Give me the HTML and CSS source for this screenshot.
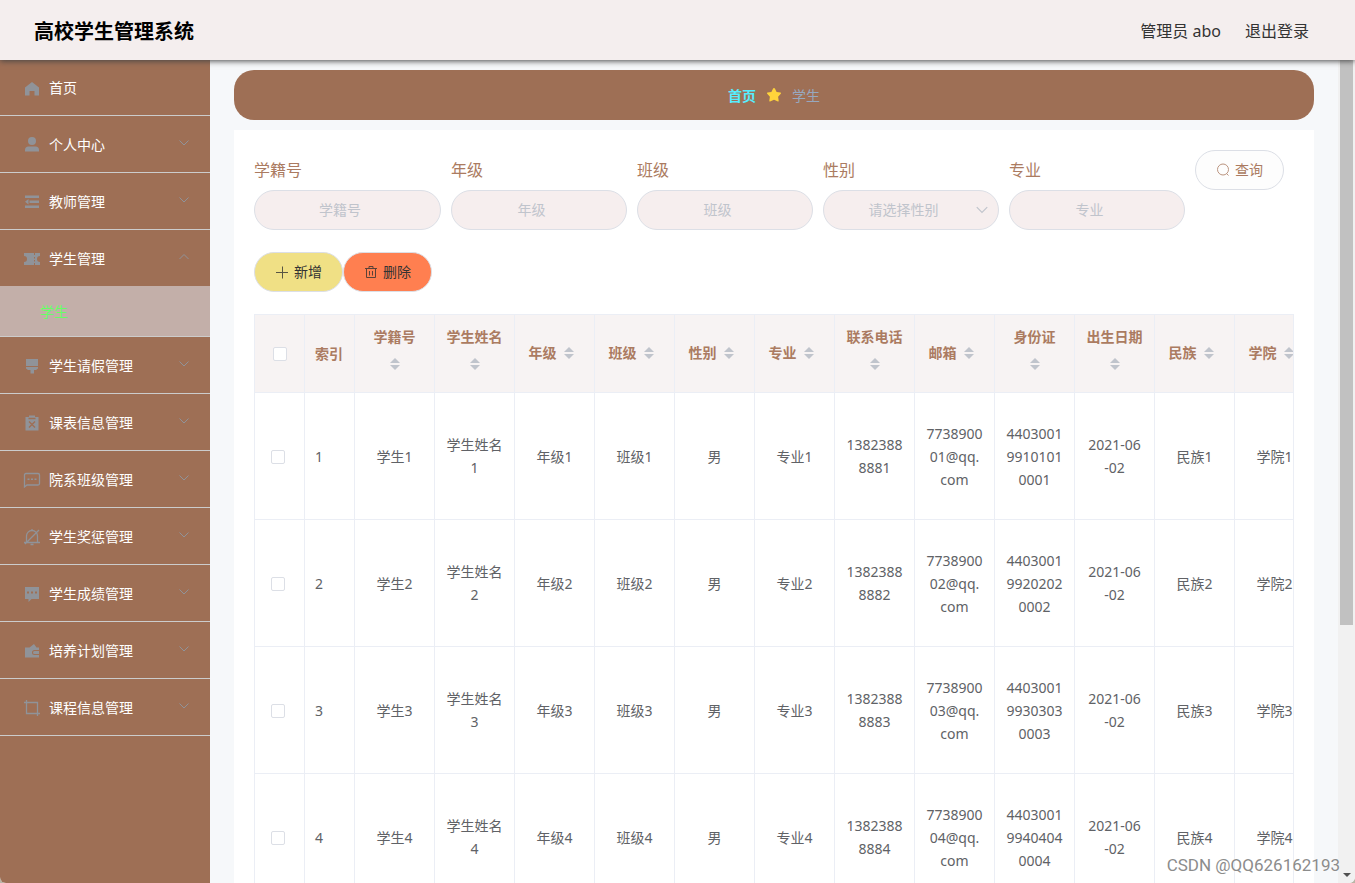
FILE: index.html
```html
<!DOCTYPE html>
<html lang="zh-CN">
<head>
<meta charset="utf-8">
<title>高校学生管理系统</title>
<link rel="stylesheet" href="styles.css">
</head>
<body>
<svg class="sprite" aria-hidden="true">
  <symbol id="down" viewBox="0 0 12 12"><path d="M1.5 3.5 6 8l4.500-4.500" fill="none" stroke="currentColor"/></symbol>
  <symbol id="up" viewBox="0 0 12 12"><path d="M1.500 8 6 3.500 10.500 8" fill="none" stroke="currentColor"/></symbol>
  <symbol id="home" viewBox="0 0 18 18"><path d="M9 2 16 7.500V15.500h-4.500v-4.500h-5v4.500H2V7.500z" fill="currentColor"/></symbol>
  <symbol id="user" viewBox="0 0 18 18"><circle cx="9" cy="5" r="4" fill="currentColor"/><path d="M2 15.500v-1.500A3.500 3.500 0 0 1 5.500 10.500h7a3.500 3.500 0 0 1 3.500 3.500V15.500z" fill="currentColor"/></symbol>
  <symbol id="fold" viewBox="0 0 18 18"><path d="M2 2.500h14v2.500H2zM6.500 7.500h9.500v2.500H6.500zM2 12.500h14V15H2zM2 8.750l3.500-2.750v5.500z" fill="currentColor"/></symbol>
  <symbol id="ticket" viewBox="0 0 18 18"><path d="M1 3h10v2h1V3h5v3a3 3 0 0 0 0 6v3h-5v-2h-1v2H1v-3a3 3 0 0 0 0-6zM11 7v1.500h1V7zm0 3v1.500h1V10z" fill="currentColor" fill-rule="evenodd"/></symbol>
  <symbol id="brush" viewBox="0 0 18 18"><path d="M3 2h12v7H3zM3 10h12v1.500L13 13h-2v3.500H7.500V13H5l-2-1.500z" fill="currentColor"/></symbol>
  <symbol id="release" viewBox="0 0 18 18"><path d="M3 3h3V1.500h6V3h3.500v13.500h-13V3z" fill="currentColor"/><path d="M5.500 4.500h7M6 7.500l6 6m0-6-6 6" stroke="#9e6f55" stroke-width="1.400" fill="none"/></symbol>
  <symbol id="chat" viewBox="0 0 18 18"><path d="M1.500 16V4q0-1.500 1.500-1.500h12q1.500 0 1.500 1.500v8.500q0 1.500-1.500 1.500H4z" fill="none" stroke="currentColor" stroke-width="1.300"/><path d="M4.500 7.500h2v1.500h-2zm3.500 0h2v1.500H8zm3.500 0h2v1.500h-2z" fill="currentColor"/></symbol>
  <symbol id="bell" viewBox="0 0 18 18"><path d="M3.500 14.500V8a5.500 5.500 0 0 1 11 0v6.500M1 14.500h16M16 2 2 16M9 1v1.500M7.500 16.500h3" fill="none" stroke="currentColor" stroke-width="1.300"/></symbol>
  <symbol id="comment" viewBox="0 0 18 18"><path d="M2 2h14v12H8.500L5.500 17v-3H2zm2 4.500v2h2v-2zm4 0v2h2v-2zm4 0v2h2v-2z" fill="currentColor" fill-rule="evenodd"/></symbol>
  <symbol id="wallet" viewBox="0 0 18 18"><path d="M2 5.500h4.500L11 2l2.500 3.500H16V8h-4.500a2.500 2.500 0 0 0 0 5H16v2.500H2z" fill="currentColor"/><path d="M11.500 9H16v3h-4.500a1.500 1.500 0 0 1 0-3" fill="currentColor"/></symbol>
  <symbol id="crop" viewBox="0 0 18 18"><path d="M1 3.500h13.500V17M3.500 1v13.500H17" fill="none" stroke="currentColor" stroke-width="1.300"/></symbol>
  <symbol id="star" viewBox="0 0 16 16"><path d="M8 1q.6 0 .9.600L10.600 5 14.500 5.600q1 .3.300 1.200L12.100 9.700l.6 4q.1 1-.8.700L8 12.700l-3.900 1.700q-.9.300-.8-.7l.6-4L1.200 6.800q-.7-.9.300-1.200L5.400 5 7.100 1.600Q7.400 1 8 1z" fill="currentColor"/></symbol>
  <symbol id="search" viewBox="0 0 14 14"><circle cx="7" cy="6.500" r="5.500" fill="none" stroke="currentColor"/><path d="m10.500 10.500 2 2" stroke="currentColor"/></symbol>
  <symbol id="plus" viewBox="0 0 14 14"><path d="M1 7.500h12M7.500 1.500v12" stroke="currentColor"/></symbol>
  <symbol id="trash" viewBox="0 0 14 14"><path d="M1 3.500h12M2.500 3.500v9h9v-9M5 3V1.500h4V3M5.500 6v4.500M8.500 6v4.500" fill="none" stroke="currentColor"/></symbol>
</svg>
<div class="app">
  <header class="top">
    <h1 class="brand">高校学生管理系统</h1>
    <nav class="account"><span>管理员 abo</span><a href="#">退出登录</a></nav>
  </header>
  <div class="body">
    <nav class="side">
      <a class="item home" href="#"><svg class="ico"><use href="#home"/></svg>首页</a>
      <a class="item" href="#"><svg class="ico"><use href="#user"/></svg>个人中心<svg class="arrow"><use href="#down"/></svg></a>
      <a class="item" href="#"><svg class="ico"><use href="#fold"/></svg>教师管理<svg class="arrow"><use href="#down"/></svg></a>
      <a class="item open" href="#"><svg class="ico"><use href="#ticket"/></svg>学生管理<svg class="arrow"><use href="#up"/></svg></a>
      <a class="subitem" href="#">学生</a>
      <a class="item" href="#"><svg class="ico"><use href="#brush"/></svg>学生请假管理<svg class="arrow"><use href="#down"/></svg></a>
      <a class="item" href="#"><svg class="ico"><use href="#release"/></svg>课表信息管理<svg class="arrow"><use href="#down"/></svg></a>
      <a class="item" href="#"><svg class="ico"><use href="#chat"/></svg>院系班级管理<svg class="arrow"><use href="#down"/></svg></a>
      <a class="item" href="#"><svg class="ico"><use href="#bell"/></svg>学生奖惩管理<svg class="arrow"><use href="#down"/></svg></a>
      <a class="item" href="#"><svg class="ico"><use href="#comment"/></svg>学生成绩管理<svg class="arrow"><use href="#down"/></svg></a>
      <a class="item" href="#"><svg class="ico"><use href="#wallet"/></svg>培养计划管理<svg class="arrow"><use href="#down"/></svg></a>
      <a class="item" href="#"><svg class="ico"><use href="#crop"/></svg>课程信息管理<svg class="arrow"><use href="#down"/></svg></a>
    </nav>
    <main class="main">
      <div class="crumbs"><a href="#">首页</a><svg class="star"><use href="#star"/></svg><span>学生</span></div>
      <section class="card">
        <form class="search">
          <div class="field"><label for="f1">学籍号</label><input id="f1" type="text" placeholder="学籍号"></div>
          <div class="field"><label for="f2">年级</label><input id="f2" type="text" placeholder="年级"></div>
          <div class="field"><label for="f3">班级</label><input id="f3" type="text" placeholder="班级"></div>
          <div class="field"><label for="f4">性别</label><div class="pick"><select id="f4"><option>请选择性别</option></select><svg class="pick-arrow"><use href="#down"/></svg></div></div>
          <div class="field"><label for="f5">专业</label><input id="f5" type="text" placeholder="专业"></div>
          <button class="btn query" type="button"><svg><use href="#search"/></svg>查询</button>
        </form>
        <div class="actions">
          <button class="btn add" type="button"><svg><use href="#plus"/></svg>新增</button>
          <button class="btn del" type="button"><svg><use href="#trash"/></svg>删除</button>
        </div>
        <div class="table-wrap">
          <table class="table">
            <colgroup><col class="narrow"><col class="narrow"><col span="12"></colgroup>
            <thead><tr>
              <th class="check"><input type="checkbox" aria-label="全选"></th>
              <th class="index">索引</th>
              <th><div class="sort">学籍号<i class="carets"></i></div></th>
              <th><div class="sort">学生姓名<i class="carets"></i></div></th>
              <th><div class="sort">年级<i class="carets"></i></div></th>
              <th><div class="sort">班级<i class="carets"></i></div></th>
              <th><div class="sort">性别<i class="carets"></i></div></th>
              <th><div class="sort">专业<i class="carets"></i></div></th>
              <th><div class="sort">联系电话<i class="carets"></i></div></th>
              <th><div class="sort">邮箱<i class="carets"></i></div></th>
              <th><div class="sort">身份证<i class="carets"></i></div></th>
              <th><div class="sort">出生日期<i class="carets"></i></div></th>
              <th><div class="sort">民族<i class="carets"></i></div></th>
              <th><div class="sort">学院<i class="carets"></i></div></th>
            </tr></thead>
            <tbody>
              <tr><td class="check"><input type="checkbox" aria-label="选择第1行"></td><td class="index">1</td><td>学生1</td><td>学生姓名1</td><td>年级1</td><td>班级1</td><td>男</td><td>专业1</td><td>13823888881</td><td>773890001@qq.<br>com</td><td>440300199101010001</td><td>2021-06<br>-02</td><td>民族1</td><td>学院1</td></tr>
              <tr><td class="check"><input type="checkbox" aria-label="选择第2行"></td><td class="index">2</td><td>学生2</td><td>学生姓名2</td><td>年级2</td><td>班级2</td><td>男</td><td>专业2</td><td>13823888882</td><td>773890002@qq.<br>com</td><td>440300199202020002</td><td>2021-06<br>-02</td><td>民族2</td><td>学院2</td></tr>
              <tr><td class="check"><input type="checkbox" aria-label="选择第3行"></td><td class="index">3</td><td>学生3</td><td>学生姓名3</td><td>年级3</td><td>班级3</td><td>男</td><td>专业3</td><td>13823888883</td><td>773890003@qq.<br>com</td><td>440300199303030003</td><td>2021-06<br>-02</td><td>民族3</td><td>学院3</td></tr>
              <tr><td class="check"><input type="checkbox" aria-label="选择第4行"></td><td class="index">4</td><td>学生4</td><td>学生姓名4</td><td>年级4</td><td>班级4</td><td>男</td><td>专业4</td><td>13823888884</td><td>773890004@qq.<br>com</td><td>440300199404040004</td><td>2021-06<br>-02</td><td>民族4</td><td>学院4</td></tr>
            </tbody>
          </table>
        </div>
      </section>
    </main>
    <div class="scrollbar" aria-hidden="true"><div class="thumb"></div><div class="rest"></div></div>
  </div>
  <div class="watermark">CSDN @QQ626162193</div>
</div>
</body>
</html>
```

FILE: styles.css
```css
* { box-sizing: border-box; }

body {
  margin: 0;
  background: #b9b5a6;
  color: #606266;
  font: 14px/23px "Noto Sans", "Noto Sans CJK SC", sans-serif;
}

a { color: inherit; text-decoration: none; }
input, select, button { font: inherit; }
.sprite { display: none; }

.app {
  position: relative;
  display: flex;
  flex-direction: column;
  height: 100vh;
  overflow: hidden;
  background: #f6f8fa;
  border-radius: 0 0 6px 6px;
}

.top {
  display: flex;
  flex: none;
  align-items: center;
  justify-content: space-between;
  height: 60px;
  padding: 2px 46px 0 34px;
  background: #f4eeee;
  box-shadow: 0 1px 6px #444;
  z-index: 1;
}
.brand { margin: 0; color: #000; font-size: 20px; font-weight: 700; }
.account { display: flex; gap: 24px; color: #333; font-size: 16px; }

.body { display: flex; flex: 1; min-height: 0; }

.side { flex: none; width: 210px; background: #9e6f55; color: #fff; }
.item {
  display: flex;
  align-items: center;
  height: 57px;
  padding: 0 20px 0 23px;
  border-bottom: 1px solid #ccc;
}
.item.home { height: 56px; }
.item.open { height: 56px; border-bottom: 0; }
.ico { width: 18px; height: 18px; margin: 2px 8px 0 0; color: #909399; }
.arrow { width: 12px; height: 12px; margin: 0 0 2px auto; color: #909399; }
.subitem {
  display: flex;
  align-items: center;
  height: 51px;
  padding-left: 40px;
  background: #c3afa9;
  border-bottom: 1px solid #ccc;
  color: #6f6;
}

.main { flex: 1; min-width: 0; padding: 10px 24px; overflow: hidden; }
.crumbs {
  display: flex;
  align-items: center;
  justify-content: center;
  gap: 10px;
  height: 50px;
  margin-bottom: 10px;
  border-radius: 20px;
  background: #9e6f55;
  color: #97a8be;
}
.crumbs a { color: #5ef; font-weight: 700; }
.star { width: 16px; height: 16px; color: #ffd43b; }

.card { padding: 20px; background: #fff; }

.search {
  display: grid;
  grid-template-columns: 187fr repeat(4, 176fr) auto;
  gap: 10px;
  align-items: start;
  padding-right: 10px;
  color: #ab7b61;
}
.field { min-width: 0; }
.field label { display: block; font-size: 16px; line-height: 40px; }
.field input, .field select {
  display: block;
  width: 100%;
  height: 40px;
  padding: 0 30px 2px 15px;
  border: 1px solid #dcdfe6;
  border-radius: 20px;
  background: #f6eeee;
  color: #c0c4cc;
  text-align: center;
  outline: 0;
}
.field select { appearance: none; text-align-last: center; }
.field input::placeholder { color: #c0c4cc; }
.pick { position: relative; }
.pick-arrow { position: absolute; top: 13px; right: 10px; width: 14px; height: 14px; color: #c0c4cc; }

.btn {
  display: flex;
  align-items: center;
  gap: 5px;
  height: 40px;
  padding: 0 20px 2px;
  border: 1px solid #dcdfe6;
  border-radius: 20px;
  white-space: nowrap;
}
.btn svg { width: 14px; height: 14px; margin-top: 1px; opacity: .8; }
.query { background: #fdfdfd; color: #ab7b61; }
.actions { display: flex; margin: 22px 0; }
.add { background: #f0e085; color: #333; }
.del { background: #ff7f50; color: #333; }

.table-wrap { border: 1px solid #ebeef5; border-bottom: 0; overflow: hidden; }
.table { width: 1060px; table-layout: fixed; border-collapse: separate; border-spacing: 0; }
.table .narrow { width: 50px; }
.table th, .table td {
  padding: 0 10px;
  border-right: 1px solid #ebeef5;
  border-bottom: 1px solid #ebeef5;
  text-align: center;
  word-break: break-all;
}
.table th { height: 78px; background: #f7f3f3; color: #ab7b61; font-weight: 700; }
.table td { height: 127px; }
.table .index { text-align: left; }
.table .check { padding: 2px 0 0 16px; text-align: left; }
.table th.check { padding: 0 0 0 18px; }
.check input {
  display: block;
  width: 14px;
  height: 14px;
  margin: 0;
  appearance: none;
  border: 1px solid #dcdfe6;
  border-radius: 2px;
  background: #fff;
}
.sort {
  display: flex;
  flex-wrap: wrap;
  align-items: center;
  justify-content: center;
  padding-bottom: 2px;
}
.carets {
  display: flex;
  flex-direction: column;
  align-items: center;
  justify-content: center;
  gap: 2px;
  width: 24px;
  height: 32px;
}
.carets::before, .carets::after { content: ""; border: 5px solid transparent; }
.carets::before { border-top: 0; border-bottom-color: #c0c4cc; }
.carets::after { border-bottom: 0; border-top-color: #c0c4cc; }

.scrollbar { display: flex; flex: none; flex-direction: column; width: 17px; padding: 0 2px; background: #f1f1f1; }
.thumb { flex: none; height: 68.7%; background: #c1c1c1; }
.rest { flex: 1; display: flex; align-items: flex-end; justify-content: center; padding-bottom: 6px; }
.rest::after { content: ""; border: 4px solid transparent; border-bottom: 0; border-top-color: #505050; }

.watermark {
  position: absolute;
  right: 15px;
  bottom: 6px;
  color: #8c8c8c;
  font: 17px/23px Roboto, sans-serif;
  text-shadow: 0 0 2px #fff;
}
```
